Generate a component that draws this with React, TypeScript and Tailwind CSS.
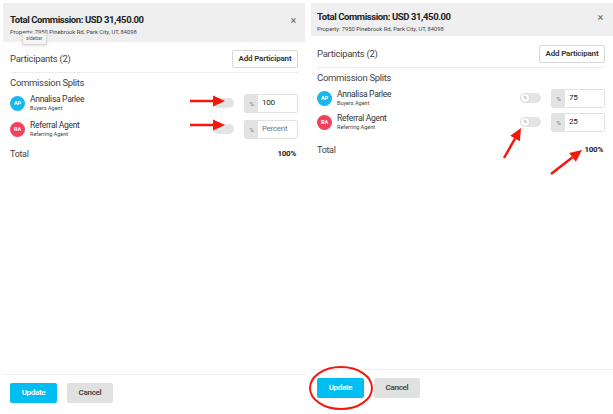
import React from 'react';

type Split = {
  initials: string;
  name: string;
  role: string;
  color: string;
  value: string;
  placeholder?: boolean;
  showKnobLabel?: boolean;
};

interface PanelProps {
  className?: string;
  padX: string;
  headerClass: string;
  splits: Split[];
  tooltip?: boolean;
  footerClass: string;
  spacing: 'loose' | 'tight';
}

function ToggleSwitch({ label }: { label?: boolean }) {
  return (
    <div className="w-[21px] h-[10px] rounded-full bg-[#e4e4e4] relative shrink-0">
      {label && (
        <div className="absolute left-0 top-0 w-[10px] h-[10px] rounded-full bg-white border border-[#dcdcdc] flex items-center justify-center text-[4px] text-[#888]">
          %
        </div>
      )}
    </div>
  );
}

function PercentInput({ value, placeholder }: { value: string; placeholder?: boolean }) {
  return (
    <div className="flex w-[54px] h-[19px] border border-[#e2e2e2] rounded-[2px] overflow-hidden shrink-0">
      <div className="w-[13px] bg-[#e3e3e3] flex items-center justify-center text-[6px] text-[#777]">%</div>
      <div className={`flex-1 bg-white flex items-center pl-[4px] text-[8px] ${placeholder ? 'text-[#777]' : 'text-[#222]'}`}>
        {value}
      </div>
    </div>
  );
}

function SplitRow({ s }: { s: Split }) {
  return (
    <div className="flex items-center h-[19px]">
      <div
        className="w-[15px] h-[15px] rounded-full flex items-center justify-center text-white text-[5.5px] font-bold shrink-0 tracking-normal"
        style={{ backgroundColor: s.color }}
      >
        {s.initials}
      </div>
      <div className="ml-[5px] flex flex-col leading-none">
        <span className="text-[8.5px] text-[#333]">{s.name}</span>
        <span className="text-[5.5px] text-[#444] mt-[3px] tracking-normal">{s.role}</span>
      </div>
      <div className="flex-1" />
      <ToggleSwitch label={s.showKnobLabel} />
      <div className="w-[10px]" />
      <PercentInput value={s.value} placeholder={s.placeholder} />
    </div>
  );
}

function CommissionPanel({ className = '', padX, headerClass, splits, tooltip, footerClass, spacing }: PanelProps) {
  const loose = spacing === 'loose';
  return (
    <div className={`flex flex-col h-full tracking-[-0.3px] ${className}`}>
      {/* Header */}
      <div className={`bg-[#efefef] relative flex justify-between ${padX} ${headerClass}`}>
        <div className="flex flex-col leading-none">
          <span className="text-[9.5px] font-bold text-[#222] tracking-[-0.4px]">Total Commission: USD 31,450.00</span>
          <span className="text-[5.8px] text-[#444] mt-[5px] tracking-normal">Property: 7950 Pinebrook Rd, Park City, UT, 84098</span>
        </div>
        <span className="text-[11px] leading-none text-[#666] mr-[2px]">×</span>
        {tooltip && (
          <div className="absolute left-[19px] top-[30px] px-[3px] py-[1px] bg-[#f4f4f4] border border-[#d8d8d8] text-[5px] text-[#555] shadow-sm tracking-normal">
            sidebar
          </div>
        )}
      </div>

      <div className={padX}>
        {/* Participants */}
        <div className={`flex items-center justify-between border-b border-[#ececec] ${loose ? 'pt-[8px] pb-[4px]' : 'pt-[9px] pb-[4px]'}`}>
          <span className="text-[9.5px] text-[#444]">Participants (2)</span>
          <button className="h-[18px] w-[66px] border border-[#d8d8d8] rounded-[2px] bg-white text-[8px] font-semibold text-[#333] tracking-[-0.2px]">
            Add Participant
          </button>
        </div>

        {/* Splits */}
        <div className="pt-[4px]">
          <div className="text-[9.5px] text-[#444] leading-none mt-[1px]">Commission Splits</div>
          <div className={`flex flex-col ${loose ? 'gap-[7px] mt-[6px]' : 'gap-[5px] mt-[6px]'}`}>
            {splits.map((s) => (
              <SplitRow key={s.initials} s={s} />
            ))}
          </div>
          <div className={`flex items-center justify-between leading-none ${loose ? 'mt-[11px]' : 'mt-[14px]'}`}>
            <span className="text-[9px] text-[#444]">Total</span>
            <span className="text-[8px] font-bold text-[#222] mr-[2px]">100%</span>
          </div>
        </div>
      </div>

      <div className="flex-1" />

      {/* Footer */}
      <div className={`border-t border-[#eeeeee] flex gap-[10px] ${padX} ${footerClass}`}>
        <button className="w-[47px] h-[20px] bg-[#00bdf2] text-white text-[8px] font-semibold rounded-[2px]">Update</button>
        <button className="w-[46px] h-[20px] bg-[#e1e1e1] text-[#444] text-[8px] font-semibold rounded-[2px]">Cancel</button>
      </div>
    </div>
  );
}

const before: Split[] = [
  { initials: 'AP', name: 'Annalisa Parlee', role: 'Buyers Agent', color: '#19b6f0', value: '100' },
  { initials: 'RA', name: 'Referral Agent', role: 'Referring Agent', color: '#f2405d', value: 'Percent', placeholder: true },
];

const after: Split[] = [
  { initials: 'AP', name: 'Annalisa Parlee', role: 'Buyers Agent', color: '#19b6f0', value: '75', showKnobLabel: true },
  { initials: 'RA', name: 'Referral Agent', role: 'Referring Agent', color: '#f2405d', value: '25', showKnobLabel: true },
];

function Arrow({ x1, y1, x2, y2 }: { x1: number; y1: number; x2: number; y2: number }) {
  const a = Math.atan2(y2 - y1, x2 - x1);
  const len = 12;
  const w = 5.5;
  const bx = x2 - len * Math.cos(a);
  const by = y2 - len * Math.sin(a);
  const px = -Math.sin(a) * w;
  const py = Math.cos(a) * w;
  return (
    <g>
      <line x1={x1} y1={y1} x2={bx} y2={by} stroke="#f4180c" strokeWidth={2.5} />
      <polygon points={`${x2},${y2} ${bx + px},${by + py} ${bx - px},${by - py}`} fill="#f4180c" />
    </g>
  );
}

export default function App() {
  return (
    <div className="w-[613px] h-[414px] bg-white relative overflow-hidden flex" style={{ fontFamily: 'Roboto, "Liberation Sans", sans-serif' }}>
      <CommissionPanel
        className="w-[302px] ml-[3px] pt-[3px]"
        padX="px-[7px]"
        headerClass="h-[39px] pt-[12px]"
        splits={before}
        tooltip
        footerClass="pt-[8px] pb-[11px]"
        spacing="loose"
      />
      <div className="w-[6px]" />
      <CommissionPanel
        className="flex-1 pt-[3px]"
        padX="pl-[6px] pr-[8px]"
        headerClass="h-[33px] pt-[9px]"
        splits={after}
        footerClass="pt-[8px] pb-[16px]"
        spacing="tight"
      />

      {/* annotation overlay */}
      <svg className="absolute inset-0 pointer-events-none" width={613} height={414}>
        <Arrow x1={190} y1={101} x2={225} y2={101} />
        <Arrow x1={190} y1={125} x2={225} y2={125} />
        <Arrow x1={504} y1={158} x2={521} y2={128} />
        <Arrow x1={551} y1={174} x2={582} y2={150} />
        <ellipse cx={341} cy={388} rx={31} ry={21} fill="none" stroke="#f4180c" strokeWidth={2} />
      </svg>
    </div>
  );
}
